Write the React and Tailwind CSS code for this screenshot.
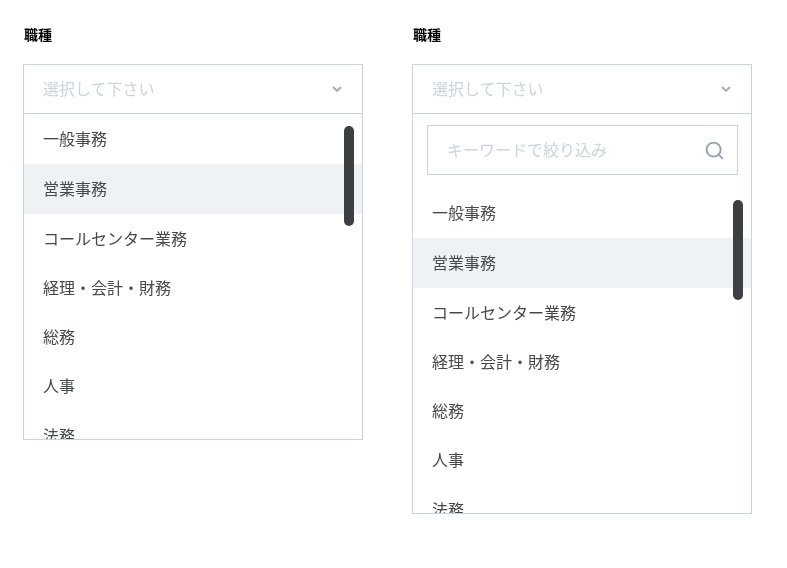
import { Search } from "lucide-react";

const font = { fontFamily: '"Noto Sans CJK JP", "Noto Sans", sans-serif' };

const items = [
  { label: "一般事務", h: "h-[50px]" },
  { label: "営業事務", h: "h-[50px]", active: true },
  { label: "コールセンター業務", h: "h-[49px]" },
  { label: "経理・会計・財務", h: "h-[49px]" },
  { label: "総務", h: "h-[49px]" },
  { label: "人事", h: "h-[50px]" },
  { label: "法務", h: "h-[49px]" },
];

function Chevron() {
  return (
    <svg width="12" height="8" viewBox="0 0 12 8" fill="none" className="mt-[2px]">
      <path d="M2 2l4 3.8L10 2" stroke="#a3b0bd" strokeWidth="2" />
    </svg>
  );
}

function Options() {
  return (
    <ul>
      {items.map((item) => (
        <li
          key={item.label}
          className={`flex items-center pb-[2px] pl-[19px] text-base text-[#45494c] ${item.h} ${item.active ? "bg-[#eef2f5]" : ""}`}
        >
          {item.label}
        </li>
      ))}
    </ul>
  );
}

function Select({ withSearch }) {
  return (
    <div className="w-[340px] transform-gpu antialiased">
      <p className="mb-[22px] h-[16px] pl-[1px] text-sm leading-[16px] font-bold text-black">職種</p>
      <div className={`relative overflow-hidden border border-[#c9d4dd] bg-white ${withSearch ? "h-[450px]" : "h-[376px]"}`}>
        <div className="flex h-[49px] items-center justify-between border-b border-[#c9d4dd] pr-[19px] pb-[2px] pl-[19px]">
          <span className="text-base text-[#c9d4dd]">選択して下さい</span>
          <Chevron />
        </div>
        {withSearch && (
          <div className="pt-[11px] pr-[13px] pb-[13px] pl-[14px]">
            <div className="flex h-[50px] items-center justify-between border border-[#c9d4dd] pr-[12px] pb-[2px] pl-[19px]">
              <span className="text-base text-[#c9d4dd]">キーワードで絞り込み</span>
              <Search size={21} strokeWidth={2.2} className="mt-[2px] text-[#94a3b3]" />
            </div>
          </div>
        )}
        <Options />
        <div className={`absolute left-[320px] h-[100px] w-[10px] rounded-full bg-[#3c4043] ${withSearch ? "top-[135px]" : "top-[61px]"}`} />
      </div>
    </div>
  );
}

export default function App() {
  return (
    <div className="flex min-h-[568px] gap-[49px] bg-white pt-[26px] pl-[23px]" style={font}>
      <Select />
      <Select withSearch />
    </div>
  );
}
